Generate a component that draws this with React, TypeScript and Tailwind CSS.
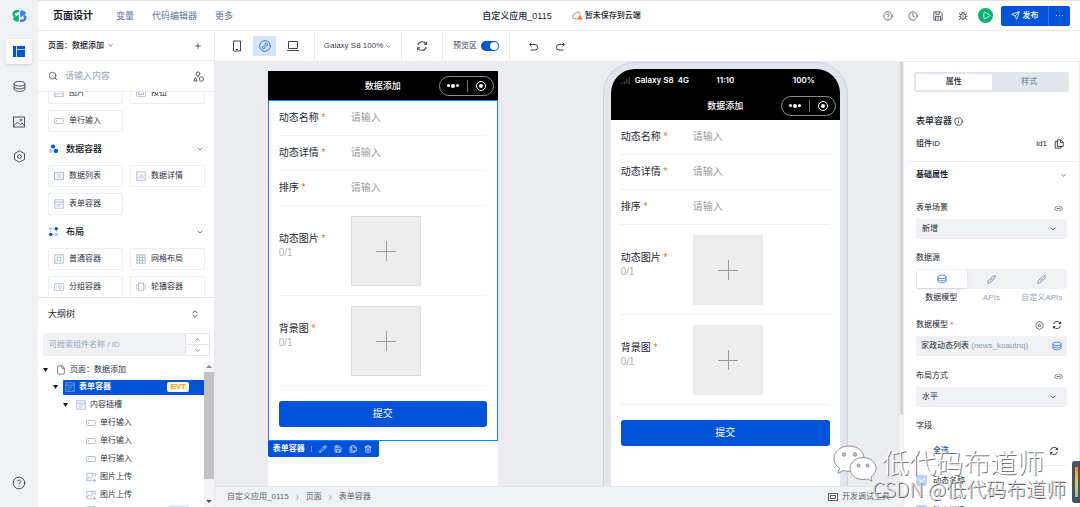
import { useId, type ReactNode } from "react";
import {
  Bug,
  ChevronDown,
  ChevronRight,
  ChevronUp,
  ChevronsUpDown,
  CircleHelp,
  Clock,
  File,
  Info,
  Link2,
  Pencil,
  Play,
  Plus,
  Save,
  Search,
  Send,
  Trash2,
} from "lucide-react";

type Glyph =
  | "image"
  | "button"
  | "input"
  | "list"
  | "chart"
  | "form"
  | "box"
  | "grid"
  | "group"
  | "carousel"
  | "upload";

const glyphs: Record<Glyph, ReactNode> = {
  image: (
    <>
      <rect x="1" y="1.5" width="10" height="9" />
      <path d="M1 9l3-3 2 2 2-2 3 3" />
      <circle cx="7.5" cy="4" r=".7" />
    </>
  ),
  button: (
    <>
      <rect x=".5" y="2" width="11" height="8" rx="1" />
      <rect x="3" y="4.5" width="6" height="3" />
    </>
  ),
  input: (
    <>
      <rect x=".5" y="3" width="11" height="6" rx="1" />
      <path d="M3 5v2" />
    </>
  ),
  list: (
    <>
      <rect x=".5" y="2" width="11" height="8" />
      <path d="M3 4.7h1M5 4.7h4M3 7.2h1M5 7.2h4" />
    </>
  ),
  chart: (
    <>
      <rect x="1" y="1" width="10" height="10" />
      <path d="M3.7 9V6M6 9V3.5M8.3 9V5" />
    </>
  ),
  form: (
    <>
      <rect x="1" y="1" width="10" height="10" />
      <path d="M1 3.8h10M3 6.2h6M3 8.5h4" />
    </>
  ),
  box: (
    <>
      <rect x="1" y="1" width="10" height="10" />
      <rect x="3.8" y="3.8" width="4.4" height="4.4" />
    </>
  ),
  grid: (
    <>
      <rect x="1" y="1" width="10" height="10" />
      <path d="M4.3 1v10M7.7 1v10M1 4.3h10M1 7.7h10" />
    </>
  ),
  group: (
    <>
      <rect x=".5" y="2" width="11" height="8" rx="1" />
      <path d="M2.5 4.8h1M5 4.8h4.5M2.5 7.3h1M5 7.3h4.5" />
    </>
  ),
  carousel: (
    <>
      <rect x="3.2" y="1.5" width="5.6" height="9" />
      <path d="M1 2.5v7M11 2.5v7" />
    </>
  ),
  upload: (
    <>
      <path d="M11 6V1.5H1v9h6.5" />
      <path d="M1 9l3-3.5 2 2 2-2" />
      <circle cx="7.8" cy="3.8" r=".7" />
      <path d="M10 8v4M8 10h4" />
    </>
  ),
};

function GlyphIcon({ name, className = "text-[#a3aec6]" }: { name: Glyph; className?: string }) {
  return (
    <svg viewBox="0 0 12 12" fill="none" stroke="currentColor" strokeWidth="1" className={`size-[10px] shrink-0 ${className}`} aria-hidden="true">
      {glyphs[name]}
    </svg>
  );
}

function Stack({ className }: { className: string }) {
  return (
    <svg viewBox="0 0 14 14" fill="none" stroke="currentColor" className={className} aria-hidden="true">
      <ellipse cx="7" cy="4" rx="5.800" ry="2.500" />
      <path d="M1.200 4v3c0 1.400 2.600 2.500 5.800 2.500s5.800-1.100 5.800-2.500V4M1.200 7v2.800c0 1.400 2.600 2.500 5.800 2.500s5.800-1.100 5.800-2.500V7" />
    </svg>
  );
}

function Target({ className }: { className: string }) {
  return (
    <svg viewBox="0 0 14 14" fill="none" stroke="currentColor" className={className} aria-hidden="true">
      <path d="M7 .8l5.400 3.100v6.200L7 13.200l-5.400-3.100V3.900z" />
      <circle cx="7" cy="7" r="2" />
    </svg>
  );
}

function Refresh({ className }: { className: string }) {
  return (
    <svg viewBox="0 0 12 12" fill="none" stroke="currentColor" strokeWidth="1.100" className={className} aria-hidden="true">
      <path d="M1.800 5A4.400 4.400 0 0 1 9.800 3.800M10.200 7A4.400 4.400 0 0 1 2.200 8.200" />
      <path d="M10.300 1.800v2.400H8M1.700 10.200V7.800H4" />
    </svg>
  );
}

function CopyIcon({ className }: { className: string }) {
  return (
    <svg viewBox="0 0 12 12" fill="none" stroke="currentColor" className={className} aria-hidden="true">
      <path d="M4 1h4l3 3v5H4zM7.800 1v3.200H11M4 3H1.500v8H8.500V9" />
    </svg>
  );
}

function MiniProgram({ className }: { className: string }) {
  return (
    <svg viewBox="0 0 14 14" fill="none" stroke="currentColor" strokeLinecap="round" className={className} aria-hidden="true">
      <circle cx="7" cy="7" r="6.200" />
      <path d="M5.200 7.100A1.500 1.500 0 1 0 7 8.700V5.300A1.500 1.500 0 1 1 8.800 6.900" />
    </svg>
  );
}

function Logo() {
  return (
    <svg viewBox="0 0 15 14" className="h-[14px] w-[15px]" aria-hidden="true">
      <g fill="none" strokeWidth="2.400">
        <path d="M7 2.300H4.800Q1.700 2.700 1.700 5.200 1.700 7 3.600 7.400" stroke="#07b073" />
        <path d="M8 11.700h2.200q3.100-.4 3.100-2.900 0-1.800-1.900-2.200" stroke="#3b82f0" />
      </g>
      <path d="M.8 9.600L6.800 5.600v5.700q0 1.500-1.800 1.400Q1.800 12.400.8 9.600z" fill="#07b073" />
      <path d="M14.200 4.400L8.200 8.400V2.700q0-1.500 1.800-1.400 3.200.3 4.200 3.100z" fill="#3b82f0" />
    </svg>
  );
}

function Rail() {
  return (
    <nav className="flex w-[38px] shrink-0 flex-col items-center bg-[#f0f1f5] pt-[9px] pb-[17px] text-[#3f4350]">
      <Logo />
      <div className="mt-[16px] flex flex-col gap-[10px]">
        <button aria-label="页面设计" className="flex h-[25px] w-[26px] items-center justify-center rounded-[2px] bg-white shadow-sm">
          <svg viewBox="0 0 12 11" className="h-[11px] w-[12px]" fill="#0052d9" aria-hidden="true">
            <path d="M0 0h3.200v11H0zM4 0h8v3H4zM4 3.800h8V11H4z" />
          </svg>
        </button>
        <button aria-label="数据源" className="flex h-[25px] w-[26px] items-center justify-center">
          <Stack className="size-[13px]" />
        </button>
        <button aria-label="素材" className="flex h-[25px] w-[26px] items-center justify-center">
          <svg viewBox="0 0 14 14" fill="none" stroke="currentColor" strokeWidth=".9" className="size-[14px]" aria-hidden="true">
            <rect x="1.500" y="2" width="11" height="10" />
            <path d="M1.500 11l4-4 2.500 2.500L10 8l2.500 3" />
            <circle cx="9" cy="5" r="1" />
          </svg>
        </button>
        <button aria-label="设置" className="flex h-[25px] w-[26px] items-center justify-center">
          <Target className="size-[13px]" />
        </button>
      </div>
      <button aria-label="帮助" className="mt-auto">
        <CircleHelp className="size-[14px]" strokeWidth={1.600} />
      </button>
    </nav>
  );
}

function Header() {
  return (
    <header className="flex h-[31px] shrink-0 items-center border-t border-b border-t-[#e2e3e6] border-b-[#e9ebf0] bg-white pr-[10px] pl-[15px]">
      <div className="flex flex-1 items-center gap-[18px] text-[9px] text-[#5f6f8e]">
        <h1 className="mr-[5px] text-[10px] font-bold text-[#16181d]">页面设计</h1>
        <a href="#vars">变量</a>
        <a href="#code">代码编辑器</a>
        <a href="#more">更多</a>
      </div>
      <div className="flex items-center gap-[20px] font-medium text-[#24272e]">
        <span className="text-[9px]">自定义应用_0115</span>
        <span className="flex items-center gap-[2px] text-[8px]">
          <svg viewBox="0 0 12 12" fill="none" className="size-[11px]" aria-hidden="true">
            <path d="M6 9.500H3a2.300 2.300 0 0 1-.2-4.600 3.300 3.300 0 0 1 6.400-.3" stroke="#888" />
            <path d="M8.500 5l3.200 5.400H5.500z" fill="#ff7a2b" />
          </svg>
          暂未保存到云端
        </span>
      </div>
      <div className="flex flex-1 items-center justify-end text-[#3f4350]">
        <div className="flex items-center gap-[15px]">
          <button aria-label="帮助"><CircleHelp className="size-[10px]" strokeWidth={1.800} /></button>
          <button aria-label="历史"><Clock className="size-[10px]" strokeWidth={1.800} /></button>
          <button aria-label="保存">
            <svg viewBox="0 0 12 12" fill="none" stroke="currentColor" className="size-[10px]" aria-hidden="true">
              <path d="M1 1h8l2 2v8H1zM3.500 1v3h4V1M3 11V6.500h6V11M4.500 8.500h3" />
            </svg>
          </button>
          <button aria-label="调试"><Bug className="size-[10px]" strokeWidth={1.800} /></button>
        </div>
        <button aria-label="预览" className="ml-[10px] flex size-[15px] items-center justify-center rounded-full bg-[#07b073] pl-[1px] text-white">
          <Play className="size-[9px]" strokeWidth={2.200} />
        </button>
        <div className="ml-[8px] flex h-[20px] overflow-hidden rounded-[2px] bg-[#0052d9] text-[8px] font-medium text-white">
          <button className="flex w-[48px] items-center justify-center gap-[3px] border-r border-[#3576e3]">
            <Send className="size-[9px]" strokeWidth={2.200} />
            发布
          </button>
          <button aria-label="更多操作" className="flex w-[21px] items-center justify-center gap-[2px]">
            <i className="size-[1px] rounded-full bg-white" />
            <i className="size-[1px] rounded-full bg-white" />
            <i className="size-[1px] rounded-full bg-white" />
          </button>
        </div>
      </div>
    </header>
  );
}

function Card({ icon, children }: { icon: Glyph; children: string }) {
  return (
    <button className="flex h-[22px] items-center gap-[5px] rounded-[2px] border border-[#eceef2] pl-[5px] text-[8px] text-[#2f333d]">
      <GlyphIcon name={icon} />
      {children}
    </button>
  );
}

function SectionTitle({ icon, children }: { icon: ReactNode; children: string }) {
  return (
    <h2 className="flex h-[33px] items-center gap-[7px] text-[9px] font-medium text-[#16181d]">
      {icon}
      {children}
      <ChevronDown className="mr-px ml-auto size-[8px] text-[#3f4350]" />
    </h2>
  );
}

function Tree() {
  const leaves: { icon: Glyph; text: string }[] = [
    { icon: "input", text: "单行输入" },
    { icon: "input", text: "单行输入" },
    { icon: "input", text: "单行输入" },
    { icon: "upload", text: "图片上传" },
    { icon: "upload", text: "图片上传" },
  ];
  const caret = (
    <svg viewBox="0 0 5 4" className="h-[4px] w-[5px] shrink-0" fill="#16181d" aria-hidden="true">
      <path d="M0 0h5L2.500 4z" />
    </svg>
  );
  return (
    <div className="flex min-h-0 flex-1 text-[8px] text-[#2f333d]">
      <ul className="min-w-0 flex-1 overflow-hidden">
        <li className="flex h-[17px] items-center gap-[8px] pl-[5px]">
          {caret}
          <span className="flex items-center gap-[4px]">
            <File className="size-[10px] text-[#555]" strokeWidth={1.800} />
            页面：数据添加
          </span>
        </li>
        <li className="flex h-[18px] items-center gap-[5px] pl-[15px]">
          {caret}
          <button className="flex h-[15px] flex-1 items-center gap-[4px] rounded-l-[1px] bg-[#0052d9] pl-[2px] font-bold text-white">
            <GlyphIcon name="form" className="text-[#7ba8f2]" />
            表单容器
            <span className="mr-[15px] ml-auto flex h-[10px] items-center rounded-[2px] bg-[#fff8ea] px-[3px] font-[Liberation_Sans,sans-serif] text-[8px] text-[#ff9d00]">EVT</span>
          </button>
        </li>
        <li className="flex h-[18px] items-center gap-[8px] pl-[25px]">
          {caret}
          <span className="flex items-center gap-[4px]">
            <GlyphIcon name="form" />
            内容插槽
          </span>
        </li>
        {leaves.map((leaf, i) => (
          <li key={i} className="flex h-[18px] items-center gap-[4px] pl-[48px]">
            <GlyphIcon name={leaf.icon} />
            {leaf.text}
          </li>
        ))}
        <li className="flex h-[18px] items-start gap-[4px] pt-px pl-[48px]">
          <GlyphIcon name="button" />
          <span className="mr-[15px] ml-auto h-[10px] w-[21px] rounded-[2px] bg-[#def1fa]" />
        </li>
      </ul>
      <div className="flex w-[10px] shrink-0 flex-col items-center bg-[#f5f5f6] py-[4px]">
        <i className="border-x-[3px] border-b-[3px] border-x-transparent border-b-[#8a8a8a]" />
        <i className="mt-[4px] w-full flex-[5] bg-[#c1c1c1]" />
        <i className="flex-1" />
        <i className="border-x-[3px] border-t-[3px] border-x-transparent border-t-[#505050]" />
      </div>
    </div>
  );
}

function Sidebar() {
  return (
    <aside className="flex w-[177px] shrink-0 flex-col border-r border-[#e9ebf0] bg-white">
      <div className="flex h-[30px] shrink-0 items-center border-b border-[#e9ebf0] pr-[12px] pl-[10px] text-[8px] font-medium text-[#16181d]">
        页面：数据添加
        <ChevronDown className="ml-[3px] size-[7px]" />
        <button aria-label="新建页面" className="ml-auto"><Plus className="size-[8px]" /></button>
      </div>
      <div className="flex h-[31px] shrink-0 items-center gap-[7px] border-b border-[#e9ebf0] pr-[10px] pl-[10px] text-[#3f4350]">
        <Search className="size-[10px] shrink-0" strokeWidth={1.800} />
        <input aria-label="搜索组件" placeholder="请输入内容" className="min-w-0 flex-1 text-[9px] outline-none placeholder:text-[#97a3bd]" />
        <svg viewBox="0 0 12 12" fill="none" stroke="currentColor" strokeWidth=".9" className="size-[11px] shrink-0" aria-hidden="true">
          <circle cx="5.500" cy="3" r="2" />
          <path d="M5.500 5v2M2.700 7.200L1 11h3.500z" />
          <rect x="7.200" y="6.500" width="4" height="4.500" rx="1" />
        </svg>
      </div>
      <div className="min-h-0 shrink-0 overflow-hidden border-b border-[#e4e6eb] pr-[9px] pl-[10px]">
        <div className="-mt-[10px] grid grid-cols-2 gap-x-[7px] gap-y-[6px]">
          <Card icon="image">图片</Card>
          <Card icon="button">按钮</Card>
          <Card icon="input">单行输入</Card>
        </div>
        <SectionTitle
          icon={
            <svg viewBox="0 0 12 12" className="size-[11px]" aria-hidden="true">
              <circle cx="5.500" cy="3.800" r="2.300" fill="#0052d9" />
              <circle cx="3" cy="8.600" r="2.200" fill="#a9c6f7" />
              <circle cx="8.600" cy="8.600" r="2.400" fill="#0052d9" />
            </svg>
          }
        >
          数据容器
        </SectionTitle>
        <div className="grid grid-cols-2 gap-x-[7px] gap-y-[6px]">
          <Card icon="list">数据列表</Card>
          <Card icon="chart">数据详情</Card>
          <Card icon="form">表单容器</Card>
        </div>
        <SectionTitle
          icon={
            <svg viewBox="0 0 12 12" className="size-[11px]" fill="#0052d9" aria-hidden="true">
              <rect x="1" y="1.500" width="3" height="3" fill="#a9c6f7" />
              <circle cx="9" cy="3" r="1.900" />
              <path d="M5 2.500h2v1H5zM5 9h2v1H5zM2 5.500h1.500v1H2zM8.500 5.500H10v1H8.500z" fill="#a9c6f7" />
              <circle cx="3" cy="9.200" r="1.900" />
              <rect x="7.800" y="7.800" width="3" height="3" fill="#a9c6f7" />
            </svg>
          }
        >
          布局
        </SectionTitle>
        <div className="-mb-px grid grid-cols-2 gap-x-[7px] gap-y-[6px]">
          <Card icon="box">普通容器</Card>
          <Card icon="grid">网格布局</Card>
          <Card icon="group">分组容器</Card>
          <Card icon="carousel">轮播容器</Card>
        </div>
      </div>
      <h2 className="flex h-[31px] shrink-0 items-center justify-between pr-[14px] pl-[10px] text-[9px] text-[#24272e]">
        大纲树
        <ChevronsUpDown className="size-[10px]" />
      </h2>
      <div className="mr-[4px] mb-[5px] ml-[5px] mt-[4px] flex h-[23px] shrink-0 overflow-hidden rounded-[2px] bg-[#f0f1f5]">
        <input aria-label="搜索组件名称" placeholder="可搜索组件名称 / ID" className="min-w-0 flex-1 pl-[6px] text-[8px] outline-none placeholder:text-[#97a3bd]" />
        <div className="flex w-[25px] flex-col border border-[#e4e6eb] bg-white text-[#3f4350]">
          <button aria-label="上一个" className="flex flex-1 items-center justify-center border-b border-[#e4e6eb]"><ChevronUp className="size-[7px]" /></button>
          <button aria-label="下一个" className="flex flex-1 items-center justify-center"><ChevronDown className="size-[7px]" /></button>
        </div>
      </div>
      <Tree />
    </aside>
  );
}

function Toolbar() {
  return (
    <div className="flex h-[31px] shrink-0 items-center border-b border-[#e9ebf0] bg-white text-[8px] text-[#3f4350]">
      <div className="flex h-full w-[100px] items-center justify-center gap-[5px] border-r border-[#e9ebf0]">
        <button aria-label="手机" className="flex h-[20px] w-[23px] items-center justify-center">
          <svg viewBox="0 0 8 12" fill="none" stroke="currentColor" className="h-[12px] w-[8px]" aria-hidden="true">
            <path d="M.5 1h7v10h-7zM3 9.500h2" />
          </svg>
        </button>
        <button aria-label="小程序" className="flex h-[20px] w-[23px] items-center justify-center rounded-[1px] bg-[#d4e3fc] text-[#1a66e0]"><MiniProgram className="size-[12px]" /></button>
        <button aria-label="电脑" className="flex h-[20px] w-[23px] items-center justify-center">
          <svg viewBox="0 0 12 12" fill="none" stroke="currentColor" className="size-[12px]" aria-hidden="true">
            <path d="M1.500 1.500h9v7h-9zM0 10.500h12" />
          </svg>
        </button>
      </div>
      <button className="flex h-full w-[87px] items-center justify-center gap-[2px] border-r border-[#e9ebf0]">
        Galaxy S8 100%
        <ChevronDown className="size-[7px]" />
      </button>
      <button aria-label="刷新" className="flex h-full w-[41px] items-center justify-center border-r border-[#e9ebf0]"><Refresh className="size-[12px]" /></button>
      <label className="flex h-full w-[67px] items-center justify-center gap-[4px] border-r border-[#e9ebf0]">
        预览区
        <input
          type="checkbox"
          role="switch"
          defaultChecked
          className="flex h-[10px] w-[18px] appearance-none items-center rounded-full bg-[#c5cad6] p-px before:block before:size-[8px] before:rounded-full before:bg-white checked:justify-end checked:bg-[#0052d9]"
        />
      </label>
      <div className="flex items-center gap-[16px] pl-[18px]">
        <button aria-label="撤销">
          <svg viewBox="0 0 11 11" fill="none" stroke="currentColor" className="size-[11px]" aria-hidden="true">
            <path d="M3.500 1.500L1.500 3.500l2 2M1.500 3.500H7a2.700 2.700 0 0 1 0 5.500H2.500" />
          </svg>
        </button>
        <button aria-label="重做">
          <svg viewBox="0 0 11 11" fill="none" stroke="currentColor" className="size-[11px]" aria-hidden="true">
            <path d="M7.500 1.500l2 2-2 2M9.500 3.500H4a2.700 2.700 0 0 0 0 5.500h4.500" />
          </svg>
        </button>
      </div>
    </div>
  );
}

function NavBar() {
  return (
    <div className="grid h-[29px] grid-cols-[1fr_auto_1fr] items-center bg-black px-[4px] text-[9px] font-medium text-white">
      <span />
      <span>数据添加</span>
      <div className="flex h-[20px] w-[55px] items-center justify-between justify-self-end rounded-full border border-[#8c8c8c] px-[7px]">
        <span className="flex items-center gap-px">
          <i className="size-[3px] rounded-full bg-white" />
          <i className="size-[4px] rounded-full bg-white" />
          <i className="size-[3px] rounded-full bg-white" />
        </span>
        <i className="h-[12px] w-px bg-[#777]" />
        <i className="flex size-[10px] items-center justify-center rounded-full border border-white"><i className="size-[4px] rounded-full bg-white" /></i>
      </div>
    </div>
  );
}

function TextRow({ label }: { label: string }) {
  const id = useId();
  return (
    <div className="flex h-[35px] items-center border-b border-[#f0f0f1]">
      <label htmlFor={id} className="w-[72px] shrink-0 text-[#24272e]">
        {label} <span className="text-[#ff6a00]">*</span>
      </label>
      <input id={id} placeholder="请输入" className="min-w-0 flex-1 outline-none placeholder:text-[#999]" />
    </div>
  );
}

function UploadRow({ label, framed }: { label: string; framed: boolean }) {
  return (
    <div className="flex h-[90px] items-center border-b border-[#f0f0f1]">
      <div className="w-[72px] shrink-0 pb-[10px] leading-[14px] text-[#24272e]">
        <p>{label} <span className="text-[#ff6a00]">*</span></p>
        <p className="text-[#b2b2b2]">0/1</p>
      </div>
      <button aria-label={`上传${label}`} className={`flex size-[70px] items-center justify-center bg-[#ededed] text-[#999] ${framed ? "border border-[#dcdcdc]" : ""}`}>
        <svg viewBox="0 0 20 20" className="size-[20px]" stroke="currentColor" aria-hidden="true">
          <path d="M10.500 0v20M0 10.500h20" />
        </svg>
      </button>
    </div>
  );
}

function Form({ framed = false }: { framed?: boolean }) {
  return (
    <form className={framed ? "border border-[#1a7bff] px-[10px] pb-[13px] text-[10px]" : "px-[10px] text-[10px]"}>
      <TextRow label="动态名称" />
      <TextRow label="动态详情" />
      <TextRow label="排序" />
      <UploadRow label="动态图片" framed={framed} />
      <UploadRow label="背景图" framed={framed} />
      <button type="button" className="mt-[15px] h-[26px] w-full rounded-[3px] bg-[#0052d9] text-white">提交</button>
    </form>
  );
}

function Canvas() {
  return (
    <main className="flex min-h-0 flex-1 bg-[#ebecf0]">
      <div className="grid min-w-0 flex-1 grid-cols-2 overflow-hidden">
        <section className="flex justify-center pt-[9px] pr-[7px]">
          <div className="w-[230px] bg-white">
            <NavBar />
            <Form framed />
            <div className="flex h-[16px] w-[111px] items-center rounded-b-[2px] bg-[#0052d9] pl-[5px] text-[8px] text-white">
              <span className="mr-[6px] font-bold">表单容器</span>
              <i className="h-[6px] w-px bg-[#6c9bea]" />
              <div className="ml-[7px] flex gap-[7px]">
                <button aria-label="编辑"><Pencil className="size-[8px]" /></button>
                <button aria-label="保存"><Save className="size-[8px]" /></button>
                <button aria-label="复制"><CopyIcon className="size-[8px]" /></button>
                <button aria-label="删除"><Trash2 className="size-[8px]" /></button>
              </div>
            </div>
          </div>
        </section>
        <section className="flex justify-center pr-[7px]">
          <div className="flex w-[245px] flex-col rounded-t-[32px] border border-b-0 border-[#ccd1dc] bg-[#e2e6ec] px-[7px] pt-[6px]">
            <div className="flex-1 overflow-hidden rounded-t-[24px] bg-white">
              <div className="grid h-[22px] grid-cols-[1fr_auto_1fr] items-center bg-black px-[10px] font-[Inter,sans-serif] text-[8px] font-semibold text-white">
                <span className="flex items-center gap-[5px]">
                  <svg viewBox="0 0 10 8" className="h-[7px] w-[9px]" fill="#444" aria-hidden="true">
                    <path d="M0 6h1.500v2H0zM2.800 4.500h1.500V8H2.800zM5.600 2.500h1.500V8H5.600zM8.400 0h1.500v8H8.400z" />
                  </svg>
                  Galaxy S8&nbsp; 4G
                </span>
                <span>11:10</span>
                <span className="pr-[15px] text-right">100%</span>
              </div>
              <NavBar />
              <Form />
            </div>
          </div>
        </section>
      </div>
      <div className="w-[3px] shrink-0 bg-[#f4f5f7]"><div className="h-5/6 bg-[#d3d5d8]" /></div>
    </main>
  );
}

function Breadcrumb() {
  return (
    <footer className="flex h-[21px] shrink-0 items-center gap-[5px] border-t border-[#e4e6eb] bg-[#f0f1f5] pr-[13px] pl-[12px] text-[8px] text-[#5a5f6b]">
      <span>自定义应用_0115</span>
      <ChevronRight className="size-[7px]" />
      <span>页面</span>
      <ChevronRight className="size-[7px]" />
      <span>表单容器</span>
      <button className="ml-auto flex items-center gap-[4px]">
        <svg viewBox="0 0 10 8" fill="none" stroke="currentColor" className="h-[8px] w-[10px]" aria-hidden="true">
          <rect x=".5" y=".5" width="9" height="7" />
          <rect x="2.500" y="2.500" width="5" height="3" />
        </svg>
        开发调试工具
      </button>
    </footer>
  );
}

function SelectField({ label, value }: { label: string; value: string }) {
  const id = useId();
  return (
    <div>
      <div className="flex h-[22px] items-center justify-between pr-[4px]">
        <label htmlFor={id}>{label}</label>
        <Link2 className="size-[9px] text-[#4c5160]" />
      </div>
      <div className="relative">
        <select id={id} className="block h-[20px] w-full appearance-none rounded-[2px] bg-[#f0f1f5] pl-[6px]">
          <option>{value}</option>
        </select>
        <ChevronDown className="pointer-events-none absolute top-[6px] right-[10px] size-[8px]" />
      </div>
    </div>
  );
}

function Pen({ className }: { className: string }) {
  return (
    <svg viewBox="0 0 12 12" fill="none" stroke="currentColor" strokeWidth="1.100" className={className} aria-hidden="true">
      <path d="M5 4.200L8 1.500l3-.5-.5 3-2.700 3L6.500 7M7 7.800L4 10.500 1 11l.5-3 2.700-3L5.500 5M4.500 7.500l3-3" />
    </svg>
  );
}

function FieldRow({ label }: { label: string }) {
  return (
    <label className="flex h-[30px] items-center gap-[6px] border-b border-[#eceef2]">
      <input
        type="checkbox"
        defaultChecked
        className="flex size-[11px] appearance-none justify-center rounded-[2px] bg-[#d0d5df] checked:bg-[#b9d1fb] checked:before:mt-[1px] checked:before:h-[6px] checked:before:w-[4px] checked:before:rotate-45 checked:before:border-r checked:before:border-b checked:before:border-white"
      />
      {label}
    </label>
  );
}

function Properties() {
  return (
    <aside className="w-[177px] shrink-0 overflow-hidden border-x border-[#eceef2] bg-white text-[8px] text-[#24272e]">
      <div className="mx-[10px] mt-[10px] grid h-[20px] grid-cols-2 rounded-[2px] bg-[#e2e5eb] p-[2px]">
        <button className="rounded-[1px] bg-white font-medium">属性</button>
        <button className="text-[#5f6f8e]">样式</button>
      </div>
      <div className="px-[12px]">
        <h2 className="mt-[20px] flex h-[18px] items-center gap-[2px] text-[9px] font-medium">
          表单容器
          <Info className="size-[9px]" />
        </h2>
        <div className="mt-[4px] flex h-[20px] items-center justify-between pr-[3px] font-medium">
          组件ID
          <span className="flex items-center gap-[7px] font-normal">id1 <CopyIcon className="size-[10px]" /></span>
        </div>
      </div>
      <hr className="mx-[2px] mt-[7px] border-[#eceef2]" />
      <div className="px-[12px]">
        <h3 className="mt-[3px] flex h-[20px] items-center justify-between font-bold">
          基础属性
          <ChevronDown className="size-[7px]" />
        </h3>
        <div className="mt-[12px]"><SelectField label="表单场景" value="新增" /></div>
        <p className="mt-[8px] flex h-[22px] items-center">数据源</p>
        <div className="grid h-[20px] grid-cols-3 rounded-[2px] bg-[#f0f1f5] p-px text-[#7b89a6]">
          <button aria-label="数据模型" className="flex items-center justify-center rounded-[1px] bg-white text-[#1a66e0] shadow-sm"><Stack className="size-[10px]" /></button>
          <button aria-label="APIs" className="flex items-center justify-center"><Pen className="size-[9px]" /></button>
          <button aria-label="自定义APIs" className="flex items-center justify-center"><Pen className="size-[9px]" /></button>
        </div>
        <div className="grid h-[18px] grid-cols-3 items-center text-center text-[#97a3bd]">
          <span className="text-[#24272e]">数据模型</span>
          <span>APIs</span>
          <span>自定义APIs</span>
        </div>
        <div className="mt-[7px] flex h-[22px] items-center">
          <label htmlFor="model">数据模型 <span className="text-[#e34d59]">*</span></label>
          <button aria-label="设置模型" className="ml-auto"><Target className="size-[9px]" /></button>
          <button aria-label="刷新模型" className="mr-[5px] ml-[8px]"><Refresh className="size-[10px]" /></button>
        </div>
        <button id="model" className="flex h-[20px] w-full items-center rounded-[2px] bg-[#f0f1f5] pr-[5px] pl-[5px]">
          家政动态列表&nbsp;<span className="text-[#8b98b4]">(news_koautnq)</span>
          <Stack className="ml-auto size-[10px] text-[#1a66e0]" />
        </button>
        <div className="mt-[9px]"><SelectField label="布局方式" value="水平" /></div>
        <p className="mt-[9px] flex h-[20px] items-center">字段</p>
        <div className="mt-[1px] flex h-[29px] items-center justify-between border-b border-[#eceef2] pr-[8px] pl-[17px]">
          <button className="font-medium text-[#1f4b8f]">全选</button>
          <button aria-label="刷新字段"><Refresh className="size-[10px]" /></button>
        </div>
        <FieldRow label="动态名称" />
        <FieldRow label="动态详情" />
      </div>
    </aside>
  );
}

function Watermark() {
  return (
    <div className="pointer-events-none absolute right-[14px] bottom-[5px] flex flex-col items-end text-white">
      <div className="mr-[22px] flex items-center gap-[5px]">
        <svg viewBox="0 0 44 38" className="h-[38px] w-[44px]" fill="#fff" stroke="#777" strokeWidth=".8" aria-hidden="true">
          <path d="M16 2C7.500 2 1 7.500 1 14.500c0 4 2 7.500 5.500 9.800L5 29.500l5.500-3c1.800.5 3.500.7 5.500.7 8.500 0 15-5.500 15-12.700S24.500 2 16 2z" />
          <circle cx="11" cy="10.500" r="1.700" fill="#ccc" />
          <circle cx="22" cy="10.500" r="1.700" fill="#ccc" />
          <path d="M30 13.500c-7.500 0-13 4.900-13 11s5.500 11 13 11c1.600 0 3-.2 4.500-.6l4.500 2.300-1.200-4.200c3.200-2 5.200-5 5.200-8.500 0-6.100-5.500-11-13-11z" />
          <circle cx="25.500" cy="21.500" r="1.500" fill="#ccc" />
          <circle cx="34.500" cy="21.500" r="1.500" fill="#ccc" />
        </svg>
        <span className="pt-[2px] text-[27px] leading-[36px] font-light [text-shadow:1px_1px_0_#777]">低代码布道师</span>
      </div>
      <span className="-mt-[6px] font-['Noto_Sans_CJK_SC',sans-serif] text-[20px] leading-[26px] font-light text-[#d8d8d8] [text-shadow:1px_1px_0_#666]">CSDN @低代码布道师</span>
    </div>
  );
}

export default function App() {
  return (
    <div className="relative flex h-screen overflow-hidden bg-white font-['Liberation_Sans','Noto_Sans_CJK_SC',sans-serif] leading-[12px]">
      <Rail />
      <div className="flex min-w-0 flex-1 flex-col">
        <Header />
        <div className="flex min-h-0 flex-1">
          <Sidebar />
          <div className="flex min-w-0 flex-1 flex-col">
            <Toolbar />
            <div className="flex min-h-0 flex-1">
              <div className="flex min-w-0 flex-1 flex-col">
                <Canvas />
                <Breadcrumb />
              </div>
              <Properties />
            </div>
          </div>
        </div>
      </div>
      <Watermark />
      <div className="absolute right-0 bottom-[4px] flex h-[42px] w-[8px] items-center justify-center rounded-l-[3px] bg-[#4b5062]">
        <div className="h-[30px] w-[3px] bg-linear-to-b from-[#f08a3c] via-[#d6cf4a] to-[#4fd6a0]" />
      </div>
    </div>
  );
}
